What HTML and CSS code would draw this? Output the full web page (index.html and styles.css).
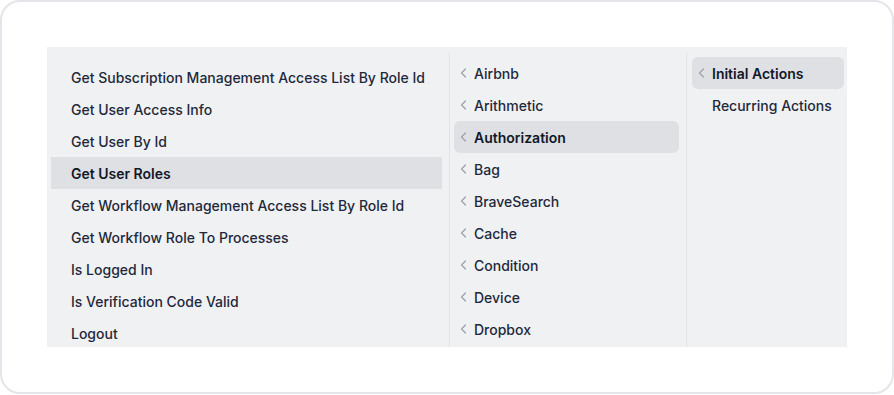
FILE: index.html
```html
<!DOCTYPE html>
<html lang="en">
<head>
  <meta charset="UTF-8">
  <title>Action picker</title>
  <link rel="stylesheet" href="styles.css">
</head>
<body>

  <div class="card">
    <div class="picker">

      <!-- Actions of the selected group -->
      <div class="column column-actions">
        <div class="row">Get Subscription Management Access List By Role Id</div>
        <div class="row">Get User Access Info</div>
        <div class="row">Get User By Id</div>
        <div class="row active">Get User Roles</div>
        <div class="row">Get Workflow Management Access List By Role Id</div>
        <div class="row">Get Workflow Role To Processes</div>
        <div class="row">Is Logged In</div>
        <div class="row">Is Verification Code Valid</div>
        <div class="row">Logout</div>
      </div>

      <!-- Integrations -->
      <div class="column column-groups">
        <div class="row"><svg class="chevron" viewBox="0 0 8 12"><path d="M5.5 2 L1.5 6 L5.5 10"/></svg>Airbnb</div>
        <div class="row"><svg class="chevron" viewBox="0 0 8 12"><path d="M5.5 2 L1.5 6 L5.5 10"/></svg>Arithmetic</div>
        <div class="row active"><svg class="chevron" viewBox="0 0 8 12"><path d="M5.5 2 L1.5 6 L5.5 10"/></svg>Authorization</div>
        <div class="row"><svg class="chevron" viewBox="0 0 8 12"><path d="M5.5 2 L1.5 6 L5.5 10"/></svg>Bag</div>
        <div class="row"><svg class="chevron" viewBox="0 0 8 12"><path d="M5.5 2 L1.5 6 L5.5 10"/></svg>BraveSearch</div>
        <div class="row"><svg class="chevron" viewBox="0 0 8 12"><path d="M5.5 2 L1.5 6 L5.5 10"/></svg>Cache</div>
        <div class="row"><svg class="chevron" viewBox="0 0 8 12"><path d="M5.5 2 L1.5 6 L5.5 10"/></svg>Condition</div>
        <div class="row"><svg class="chevron" viewBox="0 0 8 12"><path d="M5.5 2 L1.5 6 L5.5 10"/></svg>Device</div>
        <div class="row"><svg class="chevron" viewBox="0 0 8 12"><path d="M5.5 2 L1.5 6 L5.5 10"/></svg>Dropbox</div>
      </div>

      <!-- Action kinds -->
      <div class="column column-kinds">
        <div class="row active"><svg class="chevron" viewBox="0 0 8 12"><path d="M5.5 2 L1.5 6 L5.5 10"/></svg>Initial Actions</div>
        <div class="row"><svg class="chevron hidden" viewBox="0 0 8 12"><path d="M5.5 2 L1.5 6 L5.5 10"/></svg>Recurring Actions</div>
      </div>

    </div>
  </div>

</body>
</html>
```

FILE: styles.css
```css
body {
  margin: 0;
  font-family: 'Inter', 'Noto Sans', sans-serif;
  background: #ffffff;
  color: #1e293b;
}

.card {
  box-sizing: border-box;
  width: 894px;
  height: 394px;
  border: 2px solid #e3e5e9;
  border-radius: 20px;
  padding: 45px;
  background: #ffffff;
}

.picker {
  display: grid;
  grid-template-columns: 402px 237px 161px;
  height: 300px;
  background: #f0f1f3;
  overflow: hidden;
}

.column {
  margin-top: 6px;
  overflow: hidden;
}

.column-actions {
  padding: 8px 7px 0 4px;
}

.column-groups {
  border-left: 1px solid #e0e2e6;
  padding: 4px 7px 0 4px;
}

.column-kinds {
  border-left: 1px solid #e0e2e6;
  padding: 4px 3px 0 5px;
}

.row {
  display: flex;
  align-items: center;
  height: 32px;
  padding-left: 20px;
  font-size: 14px;
  font-weight: 500;
  white-space: nowrap;
  border-radius: 6px;
}

.column-groups .row,
.column-kinds .row {
  padding-left: 6px;
}

.column-actions .row {
  border-radius: 0;
}

.row.active {
  background: #dfe0e4;
  font-weight: 600;
  color: #111827;
}

.chevron {
  width: 8px;
  height: 12px;
  margin-right: 6px;
  flex-shrink: 0;
}

.chevron path {
  fill: none;
  stroke: #9ca3af;
  stroke-width: 1.3;
  stroke-linecap: round;
  stroke-linejoin: round;
}

.chevron.hidden {
  visibility: hidden;
}
```
